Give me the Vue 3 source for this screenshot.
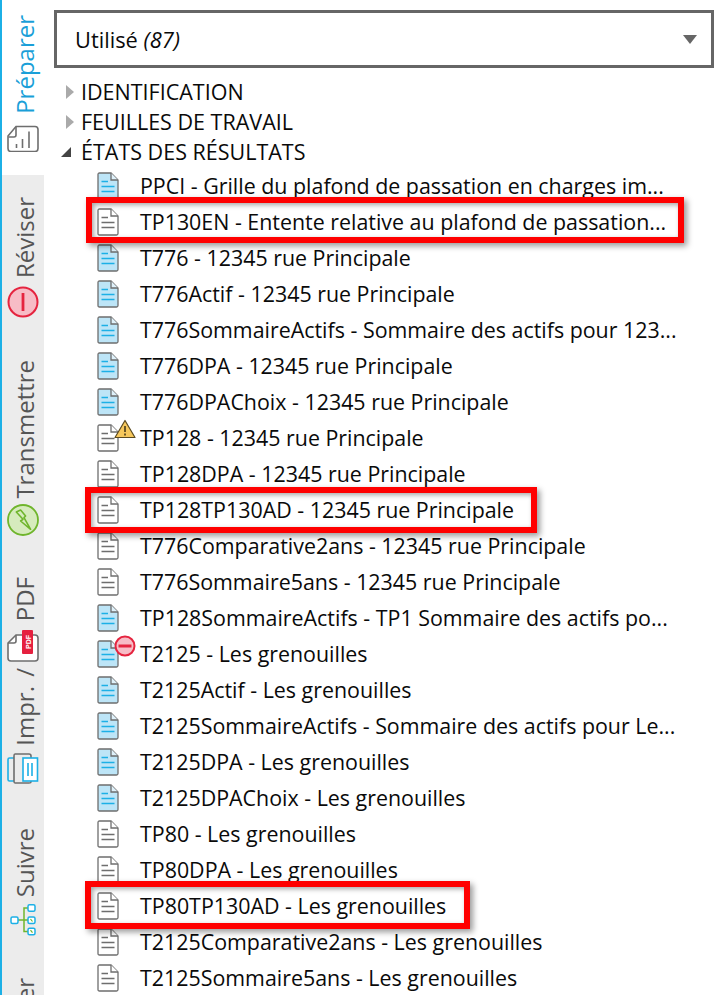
<template>
  <div class="page">
    <nav class="tabs">
      <div v-for="tab in tabs" :key="tab.label" :class="['tab', tab.cls, { active: tab.active }]">
        <span class="tab-label">{{ tab.label }}</span>
        <svg v-if="tab.icon === 'prepare'" class="tab-icon" width="32" height="30" viewBox="0 0 32 30" fill="none">
          <path d="M9 4.500H28Q31 4.500 31 7.500V26.500Q31 29.500 28 29.500H4Q1 29.500 1 26.500V14Z" stroke="#6e6e6e" stroke-width="1.600"/>
          <path d="M1.500 15H7Q9 15 9 13V5" stroke="#6e6e6e" stroke-width="1.600"/>
          <path d="M9.500 22V26M15.500 17V26M22 9.500V26" stroke="#6e6e6e" stroke-width="1.600"/>
        </svg>
        <svg v-else-if="tab.icon === 'review'" class="tab-icon" width="32" height="32" viewBox="0 0 32 32">
          <circle cx="16" cy="16" r="14.500" fill="#f7bcc6" stroke="#e5243f" stroke-width="2"/>
          <rect x="14.600" y="7" width="2.800" height="18" fill="#e5243f"/>
        </svg>
        <svg v-else-if="tab.icon === 'send'" class="tab-icon" width="32" height="32" viewBox="0 0 32 32" fill="none">
          <circle cx="16" cy="16" r="15" fill="#d6ebbd" stroke="#6fb52c" stroke-width="1.800"/>
          <path d="M9.300 8L13.600 6L18.600 12L17 13.600L23.600 25.300L13.600 17L16 15.300Z" fill="#d6ebbd" stroke="#6fb52c" stroke-width="1.600" stroke-linejoin="round"/>
        </svg>
        <svg v-else-if="tab.icon === 'pdf'" class="tab-icon" width="32" height="36" viewBox="0 0 32 36" fill="none">
          <path d="M9 6H28Q31 6 31 9V29Q31 32 28 32H4Q1 32 1 29V14Z" fill="#fff" stroke="#6e6e6e" stroke-width="1.600"/>
          <path d="M1 14H7Q9 14 9 12V6" stroke="#6e6e6e" stroke-width="1.600"/>
          <rect x="15" y="1" width="11" height="24" rx="1" fill="#e5203f"/>
          <text class="pdf-mark" transform="translate(23.600 20) rotate(-90)">PDF</text>
        </svg>
        <svg v-else-if="tab.icon === 'print'" class="tab-icon" width="32" height="32" viewBox="0 0 32 32" fill="none">
          <rect x="1" y="6" width="8" height="23" rx="1.500" stroke="#1cb0e6" stroke-width="1.600"/>
          <path d="M8 2H22Q24 2 24 4V30Q24 31 22 31H8Q7 31 7 29V4Q7 2 8 2Z" fill="#ececec" stroke="#6e6e6e" stroke-width="1.600"/>
          <rect x="16" y="6" width="14.500" height="23" fill="#fff" stroke="#1cb0e6" stroke-width="1.600"/>
          <path d="M21 11V24M25 11V24" stroke="#1cb0e6" stroke-width="1.600"/>
        </svg>
        <svg v-else-if="tab.icon === 'track'" class="tab-icon" width="32" height="32" viewBox="0 0 32 32" fill="none">
          <path d="M11 16H21M21 4H17V27.500H21" stroke="#6fb52c" stroke-width="1.500"/>
          <rect x="4" y="13" width="7" height="6.500" rx="1.500" fill="#fff" stroke="#1cb0e6" stroke-width="1.500"/>
          <rect x="21" y="0.800" width="7" height="6.500" rx="1.500" fill="#fff" stroke="#1cb0e6" stroke-width="1.500"/>
          <rect x="21" y="13" width="7" height="6.500" rx="1.500" fill="#fff" stroke="#1cb0e6" stroke-width="1.500"/>
          <rect x="21" y="24.200" width="7" height="6.500" rx="1.500" fill="#fff" stroke="#1cb0e6" stroke-width="1.500"/>
          <path d="M23.500 15L25.500 17.500M23.500 26.200L25.500 28.700" stroke="#6fb52c" stroke-width="1.200"/>
        </svg>
      </div>
    </nav>

    <main class="panel">
      <div class="select">
        <span>Utilisé <em>(87)</em></span>
        <i class="select-arrow"></i>
      </div>

      <ul class="sections">
        <li v-for="s in sections" :key="s.label" class="section">
          <i :class="s.open ? 'arrow-open' : 'arrow-closed'"></i>
          {{ s.label }}
        </li>
      </ul>

      <ul class="docs">
        <li v-for="doc in docs" :key="doc.name" class="doc">
          <span class="doc-icon">
            <svg width="22" height="28" viewBox="0 0 22 28" fill="none">
              <path d="M2.500 1H14L21 8V25.500Q21 27 19.500 27H2.500Q1 27 1 25.500V2.500Q1 1 2.500 1Z"
                :fill="doc.blue ? '#bde5f7' : '#fff'" stroke="#6e6e6e" stroke-width="1.300"/>
              <path d="M14 1V8H21" :fill="doc.blue ? '#dff1fa' : '#fff'" stroke="#6e6e6e" stroke-width="1.300"/>
              <path d="M4.500 9.500H11M4.500 14.500H17.500M4.500 19.500H17.500" :stroke="doc.blue ? '#1cb0e6' : '#6e6e6e'" stroke-width="1.300"/>
            </svg>
            <svg v-if="doc.badge === 'warn'" class="badge warn" width="22" height="20" viewBox="0 0 22 20">
              <path d="M11 1.500L21 18.500H1Z" fill="#f7c85c" stroke="#5b4a20" stroke-width="1.200" stroke-linejoin="round"/>
              <path d="M11 7V13M11 14.500V16.500" stroke="#5b4a20" stroke-width="1.800"/>
            </svg>
            <svg v-else-if="doc.badge === 'stop'" class="badge stop" width="22" height="22" viewBox="0 0 22 22">
              <circle cx="11" cy="11" r="9.500" fill="#f7bcc6" stroke="#e5243f" stroke-width="2"/>
              <rect x="4.500" y="9.500" width="13" height="3" fill="#e5243f"/>
            </svg>
          </span>
          <span class="doc-name">{{ doc.name }}</span>
        </li>
      </ul>
    </main>

    <div class="mark mark-1"></div>
    <div class="mark mark-2"></div>
    <div class="mark mark-3"></div>
  </div>
</template>

<script setup>
const tabs = [
  { label: 'Préparer', icon: 'prepare', cls: 'tab-prepare', active: true },
  { label: 'Réviser', icon: 'review', cls: 'tab-review' },
  { label: 'Transmettre', icon: 'send', cls: 'tab-send' },
  { label: 'PDF', icon: 'pdf', cls: 'tab-pdf' },
  { label: 'Impr. /', icon: 'print', cls: 'tab-print' },
  { label: 'Suivre', icon: 'track', cls: 'tab-track' },
  { label: 'Classer', cls: 'tab-last' }
]

const sections = [
  { label: 'IDENTIFICATION' },
  { label: 'FEUILLES DE TRAVAIL' },
  { label: 'ÉTATS DES RÉSULTATS', open: true }
]

const docs = [
  { name: 'PPCI - Grille du plafond de passation en charges im...', blue: true },
  { name: 'TP130EN - Entente relative au plafond de passation...' },
  { name: 'T776 - 12345 rue Principale', blue: true },
  { name: 'T776Actif - 12345 rue Principale', blue: true },
  { name: 'T776SommaireActifs - Sommaire des actifs pour 123...', blue: true },
  { name: 'T776DPA - 12345 rue Principale', blue: true },
  { name: 'T776DPAChoix - 12345 rue Principale', blue: true },
  { name: 'TP128 - 12345 rue Principale', badge: 'warn' },
  { name: 'TP128DPA - 12345 rue Principale' },
  { name: 'TP128TP130AD - 12345 rue Principale' },
  { name: 'T776Comparative2ans - 12345 rue Principale' },
  { name: 'T776Sommaire5ans - 12345 rue Principale' },
  { name: 'TP128SommaireActifs - TP1 Sommaire des actifs po...', blue: true },
  { name: 'T2125 - Les grenouilles', blue: true, badge: 'stop' },
  { name: 'T2125Actif - Les grenouilles', blue: true },
  { name: 'T2125SommaireActifs - Sommaire des actifs pour Le...', blue: true },
  { name: 'T2125DPA - Les grenouilles', blue: true },
  { name: 'T2125DPAChoix - Les grenouilles', blue: true },
  { name: 'TP80 - Les grenouilles' },
  { name: 'TP80DPA - Les grenouilles' },
  { name: 'TP80TP130AD - Les grenouilles' },
  { name: 'T2125Comparative2ans - Les grenouilles' },
  { name: 'T2125Sommaire5ans - Les grenouilles' }
]
</script>

<style scoped>
.page {
  position: relative;
  display: flex;
  width: 720px;
  height: 995px;
  overflow: hidden;
  background: #fff;
  color: #0a0a0a;
  font-family: "Open Sans", "Noto Sans", sans-serif;
}

.tabs {
  display: flex;
  flex-direction: column;
  width: 44px;
  height: 995px;
  flex-shrink: 0;
  overflow: hidden;
  box-sizing: border-box;
  border-left: 2px solid #1cb0e6;
  background: #ececec;
}

.tab {
  display: flex;
  flex-direction: column;
  align-items: center;
  flex-shrink: 0;
  gap: 8px;
  box-sizing: border-box;
}

.tab.active {
  background: #fff;
  height: 175px;
  padding-top: 15px;
}

.tab-review { padding-top: 22px; height: 161px; }
.tab-send { padding-top: 24px; height: 217px; gap: 5px; }
.tab-pdf { padding-top: 24px; height: 113px; }
.tab-print { padding-top: 2px; height: 150px; gap: 6px; }
.tab-print .tab-label { word-spacing: 3px; }
.tab-track { padding-top: 12px; height: 121px; gap: 7px; }
.tab-last { margin-top: 41px; height: 60px; }

.tab-label {
  writing-mode: vertical-rl;
  transform: rotate(180deg);
  font-size: 24px;
  line-height: 30px;
  margin-left: 3px;
  color: #555;
  white-space: nowrap;
}

.tab.active .tab-label {
  color: #1a9fd8;
}

.tab-icon {
  display: block;
}

.pdf-mark {
  font-family: "Liberation Sans", sans-serif;
  font-size: 7px;
  font-weight: 700;
  fill: #fff;
}

.panel {
  flex: 1;
  padding: 10px 0 0 10px;
  min-width: 0;
}

.select {
  display: flex;
  align-items: center;
  justify-content: space-between;
  box-sizing: border-box;
  width: 660px;
  height: 58px;
  padding: 0 14px 0 18px;
  border: 3px solid #666;
  font-size: 21.800px;
}

.select-arrow {
  width: 0;
  height: 0;
  border-left: 7px solid transparent;
  border-right: 7px solid transparent;
  border-top: 9px solid #666;
}

.sections,
.docs {
  margin: 0;
  padding: 0;
  list-style: none;
}

.sections {
  margin-top: 9px;
}

.section {
  position: relative;
  height: 30px;
  line-height: 30px;
  padding-left: 27px;
  font-size: 21.500px;
  white-space: nowrap;
}

.arrow-closed,
.arrow-open {
  position: absolute;
  width: 0;
  height: 0;
}

.arrow-closed {
  left: 12px;
  top: 8px;
  border-top: 7px solid transparent;
  border-bottom: 7px solid transparent;
  border-left: 8px solid #aaa;
}

.arrow-open {
  left: 7px;
  top: 10px;
  border-bottom: 10px solid #444;
  border-left: 10px solid transparent;
}

.docs {
  margin-top: 1px;
}

.doc {
  display: flex;
  align-items: center;
  height: 36px;
  padding-left: 43px;
  font-size: 21.400px;
  white-space: nowrap;
}

.doc-icon {
  position: relative;
  display: block;
  width: 22px;
  height: 28px;
  margin-right: 21px;
  flex-shrink: 0;
}

.doc-icon svg {
  display: block;
}

.doc-name {
  margin-top: -2px;
}

.badge {
  position: absolute;
}

.badge.warn {
  left: 17px;
  top: -5px;
}

.badge.stop {
  left: 17px;
  top: -5px;
}

.mark {
  position: absolute;
  box-sizing: border-box;
  border: 6px solid #f00;
  box-shadow: 3px 3px 6px rgba(0, 0, 0, 0.4), inset 2px 2px 5px rgba(0, 0, 0, 0.35);
}

.mark-1 { left: 86px; top: 197px; width: 598px; height: 46px; }
.mark-2 { left: 85px; top: 487px; width: 452px; height: 46px; }
.mark-3 { left: 85px; top: 881px; width: 385px; height: 48px; }
</style>
